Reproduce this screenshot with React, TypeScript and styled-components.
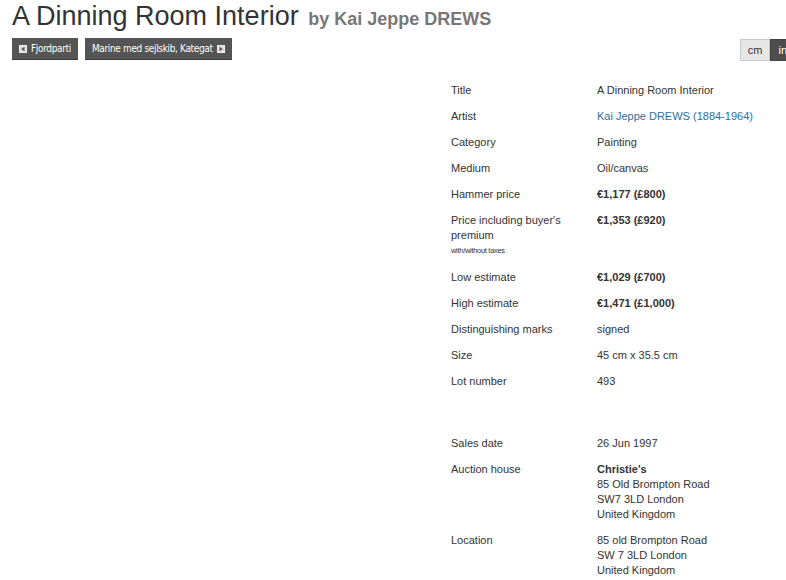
import React from "react";
import styled, { createGlobalStyle } from "styled-components";

const GlobalStyle = createGlobalStyle`
  html, body {
    margin: 0;
    padding: 0;
    background: #fff;
    overflow: hidden;
  }
  body {
    font-family: "Liberation Sans", Arial, sans-serif;
    color: #333;
  }
`;

const Page = styled.div`
  width: 783px;
  padding: 0 12px;
`;

const Heading = styled.h1`
  margin: 0;
  font-size: 27px;
  font-weight: normal;
  line-height: 33px;
  color: #333;
  white-space: nowrap;
`;

const ByLine = styled.small`
  font-size: 18px;
  font-weight: bold;
  color: #777;
  margin-left: 2px;
`;

const Toolbar = styled.div`
  display: flex;
  align-items: center;
  margin-top: 1px;
  gap: 7px;
`;

const NavButton = styled.a`
  display: inline-flex;
  align-items: center;
  gap: 4px;
  height: 22px;
  padding: 0 7px;
  background: #555;
  border-bottom: 1px solid #3c3c3c;
  box-sizing: border-box;
  color: #fff;
  font-size: 10px;
  font-family: "DejaVu Sans Condensed", "Liberation Sans", sans-serif;
  letter-spacing: -0.35px;
  text-decoration: none;
`;

const UnitGroup = styled.div`
  display: flex;
  margin-left: auto;
  margin-top: 2px;
`;

const UnitButton = styled.span<{ $active?: boolean }>`
  display: inline-flex;
  align-items: center;
  height: 22px;
  padding: 0 7px;
  box-sizing: border-box;
  font-size: 11px;
  color: ${(p) => (p.$active ? "#fff" : "#333")};
  background: ${(p) => (p.$active ? "#4d4d4d" : "#e6e6e6")};
  border: 1px solid ${(p) => (p.$active ? "#444" : "#c8c8c8")};
`;

const Main = styled.div`
  display: flex;
  margin-top: 17px;
`;

const ImageArea = styled.div`
  width: 431px;
  flex-shrink: 0;
`;

const Details = styled.table`
  border-collapse: collapse;
  font-size: 11px;
  line-height: 15px;
  color: #333;
`;

const Label = styled.td`
  width: 130px;
  padding: 5px 8px 6px 8px;
  vertical-align: top;
`;

const Value = styled.td<{ $bold?: boolean }>`
  padding: 5px 8px 6px 8px;
  vertical-align: top;
  font-weight: ${(p) => (p.$bold ? "bold" : "normal")};
  white-space: nowrap;
`;

const Spacer = styled.td`
  height: 25px;
  padding: 5px 0 6px;
`;

const Tiny = styled.div`
  font-size: 7.5px;
  line-height: 16px;
  letter-spacing: -0.3px;
`;

const ArtistLink = styled.a`
  color: #2e6e9e;
  text-decoration: none;
`;

const Arrow = ({ dir }: { dir: "left" | "right" }) => (
  <svg width="8" height="8" viewBox="0 0 8 8">
    <rect x="0.5" y="0.5" width="7" height="7" fill="#ddd" stroke="#eee" />
    {dir === "left" ? (
      <path d="M5.5 1.8 L2.2 4 L5.5 6.2 Z" fill="#555" />
    ) : (
      <path d="M2.5 1.8 L5.8 4 L2.5 6.2 Z" fill="#555" />
    )}
  </svg>
);

type Row = { label: React.ReactNode; value: React.ReactNode; bold?: boolean };

const rows: Row[] = [
  { label: "Title", value: "A Dinning Room Interior" },
  { label: "Artist", value: <ArtistLink href="#">Kai Jeppe DREWS (1884-1964)</ArtistLink> },
  { label: "Category", value: "Painting" },
  { label: "Medium", value: "Oil/canvas" },
  { label: "Hammer price", value: "€1,177 (£800)", bold: true },
  {
    label: (
      <>
        Price including buyer's premium
        <Tiny>with/without taxes</Tiny>
      </>
    ),
    value: "€1,353 (£920)",
    bold: true,
  },
  { label: "Low estimate", value: "€1,029 (£700)", bold: true },
  { label: "High estimate", value: "€1,471 (£1,000)", bold: true },
  { label: "Distinguishing marks", value: "signed" },
  { label: "Size", value: "45 cm x 35.5 cm" },
  { label: "Lot number", value: "493" },
];

const saleRows: Row[] = [
  { label: "Sales date", value: "26 Jun 1997" },
  {
    label: "Auction house",
    value: (
      <>
        <b>Christie's</b>
        <br />
        85 Old Brompton Road
        <br />
        SW7 3LD London
        <br />
        United Kingdom
      </>
    ),
  },
  {
    label: "Location",
    value: (
      <>
        85 old Brompton Road
        <br />
        SW 7 3LD London
        <br />
        United Kingdom
      </>
    ),
  },
];

function App() {
  return (
    <Page>
      <GlobalStyle />
      <Heading>
        A Dinning Room Interior <ByLine>by Kai Jeppe DREWS</ByLine>
      </Heading>
      <Toolbar>
        <NavButton href="#">
          <Arrow dir="left" /> Fjordparti
        </NavButton>
        <NavButton href="#">
          Marine med sejlskib, Kategat <Arrow dir="right" />
        </NavButton>
        <UnitGroup>
          <UnitButton>cm</UnitButton>
          <UnitButton $active>in</UnitButton>
        </UnitGroup>
      </Toolbar>
      <Main>
        <ImageArea />
        <Details>
          <tbody>
            {rows.map((r, i) => (
              <tr key={i}>
                <Label>{r.label}</Label>
                <Value $bold={r.bold}>{r.value}</Value>
              </tr>
            ))}
            <tr>
              <Spacer colSpan={2} />
            </tr>
            {saleRows.map((r, i) => (
              <tr key={"s" + i}>
                <Label>{r.label}</Label>
                <Value $bold={r.bold}>{r.value}</Value>
              </tr>
            ))}
          </tbody>
        </Details>
      </Main>
    </Page>
  );
}

export default App;
